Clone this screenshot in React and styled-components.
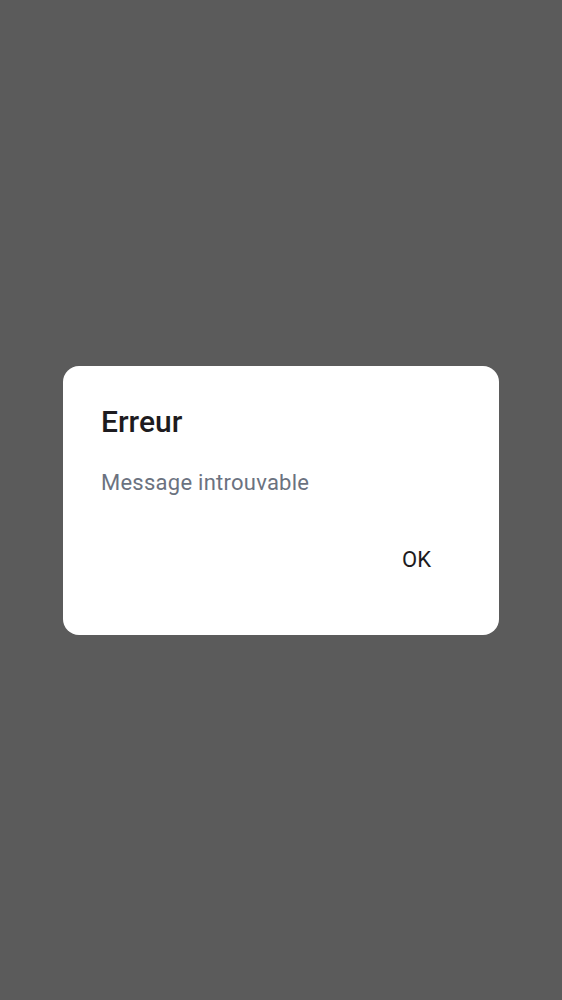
import React from 'react'
import styled, { createGlobalStyle } from 'styled-components'

const Global = createGlobalStyle`
  html, body { margin: 0; padding: 0; }
  body {
    font-family: Roboto, "Noto Sans", "Liberation Sans", sans-serif;
    background: #5b5b5b;
  }
`

const Overlay = styled.div`
  width: 562px;
  height: 1000px;
  background: #5b5b5b;
  display: flex;
  align-items: center;
  justify-content: center;
`

const Dialog = styled.div`
  width: 436px;
  height: 269px;
  box-sizing: border-box;
  background: #ffffff;
  border-radius: 16px;
  padding: 36px 38px 0 38px;
  display: flex;
  flex-direction: column;
`

const Title = styled.h2`
  margin: 0;
  font-size: 30px;
  line-height: 40px;
  font-weight: 500;
  color: #1d1b20;
`

const Message = styled.p`
  margin: 26px 0 0;
  font-size: 22px;
  line-height: 30px;
  font-weight: 400;
  letter-spacing: 0.25px;
  color: #6b7280;
`

const Actions = styled.div`
  display: flex;
  justify-content: flex-end;
  margin-top: 47px;
`

const Button = styled.button`
  border: 0;
  background: none;
  font-family: inherit;
  font-size: 22px;
  line-height: 30px;
  font-weight: 400;
  color: #1d1b20;
  padding: 0 30px 0 0;
  cursor: pointer;
`

const App = () => {
  return (
    <>
      <Global />
      <Overlay>
        <Dialog>
          <Title>Erreur</Title>
          <Message>Message introuvable</Message>
          <Actions>
            <Button>OK</Button>
          </Actions>
        </Dialog>
      </Overlay>
    </>
  )
}

export default App
